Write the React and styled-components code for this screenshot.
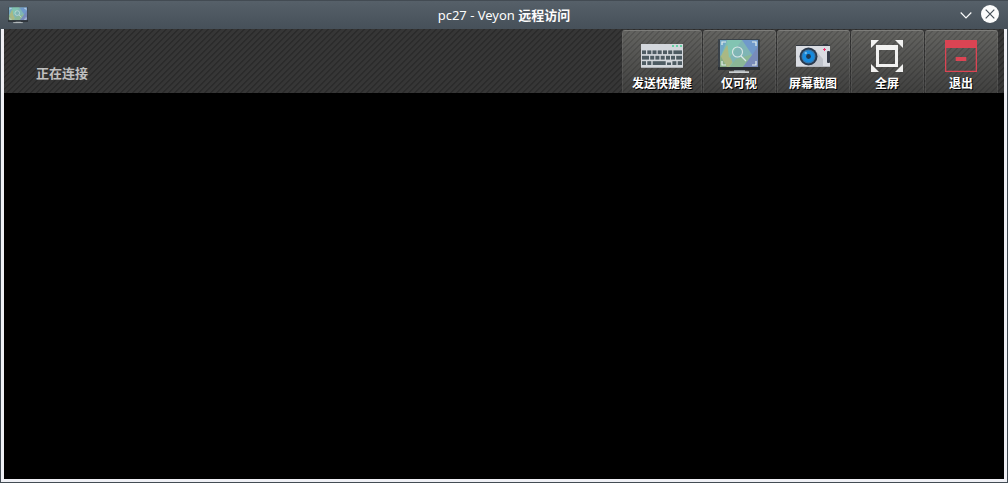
import React from "react";
import styled, { createGlobalStyle } from "styled-components";

const Global = createGlobalStyle`
  * { box-sizing: border-box; }
  html, body { margin: 0; padding: 0; overflow: hidden; background: #434c54; }
`;

const Frame = styled.div`
  display: flex;
  flex-direction: column;
  width: 1008px;
  height: 483px;
  padding: 0 1px 1px;
  background: #434c54;
  font-family: "Noto Sans", "Noto Sans CJK SC", sans-serif;
`;

const TitleBar = styled.header`
  display: grid;
  grid-template-columns: 60px 1fr 60px;
  align-items: center;
  height: 29px;
  margin: 0 -1px;
  padding: 0 8px;
  border-top: 1px solid #434b53;
  background: linear-gradient(#566069, #465059);
`;

const Title = styled.h1`
  margin: 0;
  text-align: center;
  font-size: 13px;
  line-height: 28px;
  font-weight: 400;
  color: #fcfcfc;
  white-space: pre;
`;

const TitleStrong = styled.span`
  font-weight: 700;
`;

const Controls = styled.div`
  display: flex;
  justify-content: flex-end;
  align-items: center;
  gap: 8px;
`;

const Glyph = styled.svg`
  display: block;
  flex: none;
`;

const Client = styled.main`
  display: flex;
  flex-direction: column;
  flex: 1;
  padding: 0 3px 3px;
  background: #eff0f5;
`;

const stripes = (alpha) =>
  `repeating-linear-gradient(135deg, rgba(0,0,0,${alpha}) 0 0.8px, rgba(0,0,0,0) 1.5px 3.535px, rgba(0,0,0,${alpha}) 4.243px)`;

const ToolBar = styled.div`
  display: flex;
  justify-content: space-between;
  height: 64px;
  padding: 1px 6px 0 32px;
  background: ${stripes(0.2)}, #363636;
`;

const Status = styled.div`
  padding-top: 33px;
  font-size: 13px;
  line-height: 20px;
  font-weight: 700;
  color: #c0c0c0;
`;

const Tools = styled.div`
  display: flex;
  gap: 1px;
`;

const ToolButton = styled.button`
  display: flex;
  flex-direction: column;
  align-items: center;
  width: ${(p) => p.$width}px;
  height: 63px;
  padding: 7px ${(p) => (p.$width % 2 ? 1 : 0)}px 0 0;
  border: 1px solid transparent;
  border-color: #7c7c79 rgba(255, 255, 255, 0.07) transparent;
  border-bottom: 0;
  border-radius: 3px 3px 0 0;
  background: ${stripes(0.13)}, linear-gradient(#636360, #40403f);
  background-clip: border-box;
  font-family: inherit;
`;

const Label = styled.span`
  padding-top: 1px;
  font-size: 12px;
  line-height: 18px;
  font-weight: 700;
  color: #fff;
  text-shadow: 1px 1px 0 #000;
  white-space: nowrap;
`;

const Screen = styled.div`
  flex: 1;
  background: #000;
`;

function Monitor({ width, height, id }) {
  return (
    <Glyph width={width} height={height} viewBox="0 0 42 36">
      <defs>
        <linearGradient id={id} x1="0" x2="1" y1="0" y2="0.3">
          <stop offset="0" stopColor="#70b9bb" />
          <stop offset="0.5" stopColor="#8fc1a5" />
          <stop offset="1" stopColor="#718dc1" />
        </linearGradient>
      </defs>
      <rect y="1" width="42" height="31" rx="1" fill="#3b4249" />
      <rect x="2" y="2" width="38" height="27" fill={`url(#${id})`} />
      <path d="M2 2h7L2 20z" fill="#72a7c6" />
      <path d="M2 20 9 7l9 12-7 10H2z" fill="#a9b884" />
      <path d="M2 17l7 12H2z" fill="#86ad87" />
      <path d="M9 2h15L11 20z" fill="#82c4b2" />
      <path d="M24 2l11 14-18 13-5-10z" fill="#7fb5b5" />
      <path d="M18 21l17-5-10 13H12z" fill="#8ab797" />
      <path d="M24 2h16v16h-5z" fill="#7099cb" />
      <path d="M35 16l5-8v21H25z" fill="#788bbb" />
      <path d="M4 7V4h4M34 4h4v4M38 23v4h-4M8 27H4v-4" fill="none" stroke="#e3efed" strokeWidth="1.2" />
      <circle cx="19.5" cy="14" r="5" fill="none" stroke="#dbe7e9" strokeWidth="1.1" />
      <path d="m23 18 5 5" stroke="#dbe7e9" strokeWidth="1.2" />
      <rect y="29" width="42" height="3" fill="#292e33" />
      <path d="M16 32h11v2H16z" fill="#8d969c" />
      <path d="M11 33.3h20V35H11z" fill="#cdd2d3" />
    </Glyph>
  );
}

const keyRow = (y, height, keys) =>
  keys.map(([x, w]) => <rect key={`${y}-${x}`} x={x} y={y} width={w} height={height} />);

function Keyboard() {
  return (
    <Glyph width="42" height="36" viewBox="0 0 42 36">
      <rect y="6" width="42" height="24" fill="#d3d7dc" />
      <rect y="29" width="42" height="1" fill="#aeb2b7" />
      <g fill="#68d1a5">
        <rect x="31" y="7" width="2" height="2" />
        <rect x="35" y="7" width="2" height="2" />
        <rect x="39" y="7" width="2" height="2" />
      </g>
      <g fill="#4d5b62">
        {keyRow(12.4, 3.7, [[1, 4], [6.3, 4], [11.5, 4], [16.7, 4], [22, 4], [27.2, 4], [32.4, 8.6]])}
        {keyRow(17.8, 3.8, [[1, 7], [9.2, 4], [14.4, 4], [19.7, 4], [25, 4], [30, 4], [35.2, 5.8]])}
        {keyRow(23.2, 3.8, [[1, 4], [6.3, 4], [11.7, 13], [31.4, 4], [36.7, 4.3]])}
        {keyRow(24.5, 2.5, [[26, 4]])}
      </g>
    </Glyph>
  );
}

function Camera() {
  return (
    <Glyph width="34" height="36" viewBox="0 0 34 36">
      <path d="M27 7V6h5v1h2v2H0V7z" fill="#343a43" />
      <rect y="8" width="34" height="21" fill="#d9dce2" />
      <path d="m19 12 8 9v8h-9L8 25z" fill="#bfc3cb" />
      <rect y="28" width="34" height="1" fill="#b4b7bd" />
      <rect x="31" y="13" width="3" height="12" rx="1" fill="#343b47" />
      <circle cx="12.5" cy="18.5" r="9" fill="#2b394c" />
      <circle cx="12.5" cy="18.5" r="7" fill="#3478af" />
      <circle cx="12.5" cy="18.5" r="5.8" fill="#168be0" />
      <circle cx="12.5" cy="18.5" r="2.4" fill="#20384f" />
      <circle cx="9.8" cy="15" r="1.2" fill="#6fb9ec" />
      <path d="M28.5 10v3M27 11.5h3" stroke="#ed3972" strokeWidth="1" />
    </Glyph>
  );
}

function FullScreen() {
  return (
    <Glyph width="32" height="36" viewBox="0 0 32 36">
      <g fill="#f1f1f0">
        <path d="M0 2h8L0 10zM24 2h8v8zM0 26l8 8H0zM32 26v8h-8z" />
        <path fillRule="evenodd" d="M5 7h22v22H5zM8 12v14h16V12z" />
      </g>
    </Glyph>
  );
}

function Exit() {
  return (
    <Glyph width="32" height="36" viewBox="0 0 32 36">
      <path fill="#db4453" fillRule="evenodd" d="M0 2h32v32H0zM1.3 10v22.7h29.4V10z" />
      <rect x="10.7" y="19" width="10.6" height="4" fill="#db4453" />
    </Glyph>
  );
}

const tools = [
  { label: "发送快捷键", width: 80, icon: <Keyboard /> },
  { label: "仅可视", width: 73, icon: <Monitor width="42" height="36" id="view-screen" /> },
  { label: "屏幕截图", width: 73, icon: <Camera /> },
  { label: "全屏", width: 73, icon: <FullScreen /> },
  { label: "退出", width: 73, icon: <Exit /> },
];

export default function App() {
  return (
    <>
      <Global />
      <Frame>
        <TitleBar>
          <Monitor width="20" height="18" id="title-screen" />
          <Title>pc27 - Veyon <TitleStrong>远程访问</TitleStrong></Title>
          <Controls>
            <Glyph width="12" height="18" viewBox="0 0 12 18">
              <path d="m.7 6.5 5.3 5.3 5.3-5.3" fill="none" stroke="#fcfcfc" strokeWidth="1.2" />
            </Glyph>
            <Glyph width="20" height="18" viewBox="0 0 20 18" overflow="visible">
              <circle cx="10" cy="8" r="9" fill="#fcfcfc" />
              <path d="m5.7 3.7 8.6 8.6m0-8.6-8.6 8.6" stroke="#465059" strokeWidth="1.2" />
            </Glyph>
          </Controls>
        </TitleBar>
        <Client>
          <ToolBar>
            <Status>正在连接</Status>
            <Tools>
              {tools.map((tool) => (
                <ToolButton key={tool.label} $width={tool.width}>
                  {tool.icon}
                  <Label>{tool.label}</Label>
                </ToolButton>
              ))}
            </Tools>
          </ToolBar>
          <Screen />
        </Client>
      </Frame>
    </>
  );
}
